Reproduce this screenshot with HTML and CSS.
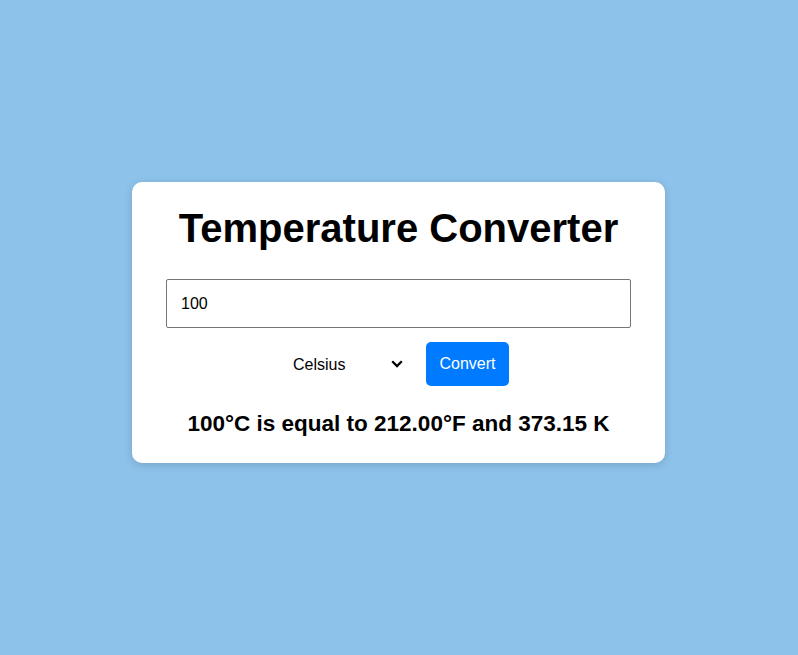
FILE: index.html
```html
<!DOCTYPE html>
<html lang="en">
<head>
<meta charset="UTF-8">
<title>Temperature Converter</title>
<link rel="stylesheet" href="styles.css">
</head>
<body>
<div class="card">
  <h1 class="title">Temperature Converter</h1>
  <input class="temp-input" type="text" value="100">
  <div class="controls">
    <select class="unit-select">
      <option>Celsius</option>
      <option>Fahrenheit</option>
      <option>Kelvin</option>
    </select>
    <button class="convert-btn">Convert</button>
  </div>
  <p class="result">100°C is equal to 212.00°F and 373.15 K</p>
</div>
</body>
</html>
```

FILE: styles.css
```css
html, body {
  margin: 0;
  padding: 0;
}
body {
  background: #8dc2ea;
  font-family: "Liberation Sans", Arial, sans-serif;
  height: 100vh;
  display: flex;
  align-items: center;
  justify-content: center;
}
.card {
  background: #fff;
  width: 533px;
  box-sizing: border-box;
  padding: 18px 34px 26px;
  border-radius: 10px;
  box-shadow: 0 2px 8px rgba(0,0,0,0.15);
  text-align: center;
  margin: 0 1px 10px 0;
}
.title {
  font-size: 40px;
  font-weight: bold;
  margin: 0 0 23px;
  line-height: 56px;
}
.temp-input {
  display: block;
  width: 100%;
  box-sizing: border-box;
  height: 49px;
  padding: 0 14px;
  font-size: 16px;
  font-family: "Liberation Sans", Arial, sans-serif;
  border: 1px solid #767676;
  border-radius: 2px;
  color: #000;
}
.controls {
  display: flex;
  justify-content: center;
  align-items: center;
  gap: 10px;
  margin-top: 14px;
}
.unit-select {
  -webkit-appearance: none;
  appearance: none;
  border: none;
  outline: none;
  background-color: #fff;
  background-image: url("data:image/svg+xml,%3Csvg xmlns='http://www.w3.org/2000/svg' width='12' height='8' viewBox='0 0 12 8'%3E%3Cpath d='M1.2 1.3 L6 6.1 L10.8 1.3' fill='none' stroke='%23000' stroke-width='2.3'/%3E%3C/svg%3E");
  background-repeat: no-repeat;
  background-position: right 13px center;
  background-size: 12px 8px;
  font-size: 16px;
  font-family: "Liberation Sans", Arial, sans-serif;
  padding: 10px 5px;
  width: 128px;
  color: #000;
}
.convert-btn {
  background: #007bff;
  color: #fff;
  border: none;
  border-radius: 5px;
  font-size: 16px;
  font-family: "Liberation Sans", Arial, sans-serif;
  height: 44px;
  width: 83px;
  padding: 0;
}
.result {
  font-size: 22.5px;
  font-weight: bold;
  margin: 25px 0 0;
}
```
